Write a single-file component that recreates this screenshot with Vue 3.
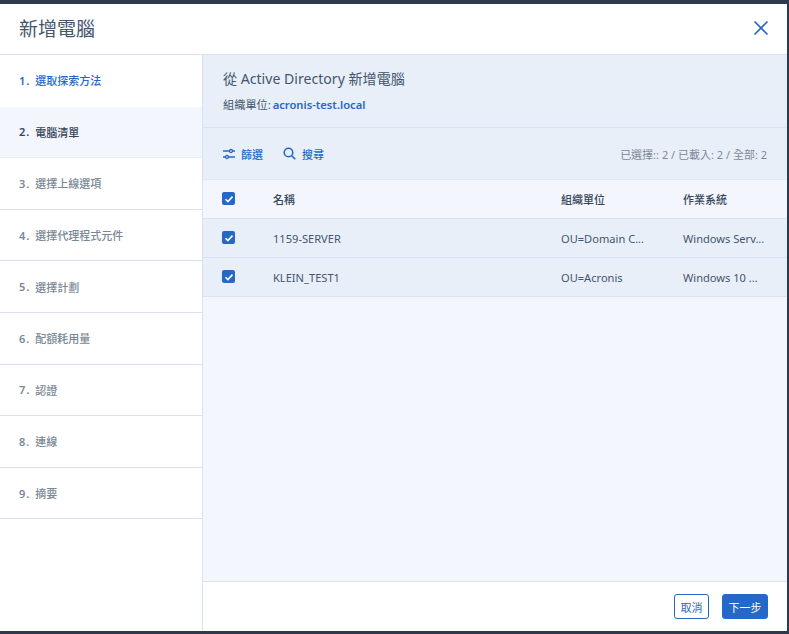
<template>
  <div class="page">
    <div class="dialog">
      <header class="dialog-head">
        <h1>新增電腦</h1>
        <button class="close" aria-label="關閉">
          <svg width="16" height="16" viewBox="0 0 16 16">
            <path d="M1.5 1.5l13 13M14.5 1.5l-13 13" fill="none" stroke="#2668c5" stroke-width="1.7" />
          </svg>
        </button>
      </header>

      <div class="dialog-body">
        <nav class="steps">
          <div
            v-for="(step, i) in steps"
            :key="step"
            class="step"
            :class="{ done: i === 0, current: i === 1 }"
          >
            <span class="num">{{ i + 1 }}.</span>{{ step }}
          </div>
        </nav>

        <main class="content">
          <section class="intro">
            <h2>從 Active Directory 新增電腦</h2>
            <p>組織單位: <a>acronis-test.local</a></p>
          </section>

          <section class="toolbar">
            <button class="tool">
              <svg width="12" height="12" viewBox="0 0 12 12" fill="none" stroke="#2668c5" stroke-width="1.3">
                <path d="M0 3h6.5M9.5 3H12M0 9h2.500M5.500 9H12" />
                <circle cx="8" cy="3" r="1.500" />
                <circle cx="4" cy="9" r="1.500" />
              </svg>
              篩選
            </button>
            <button class="tool">
              <svg width="13" height="13" viewBox="0 0 13 13" fill="none" stroke="#2668c5" stroke-width="1.600">
                <circle cx="5.500" cy="5.500" r="4.300" />
                <path d="M8.700 8.700L12.300 12.300" />
              </svg>
              搜尋
            </button>
            <span class="counts">已選擇:: 2 / 已載入: 2 / 全部: 2</span>
          </section>

          <div class="row head">
            <span class="check"><svg width="12" height="12" viewBox="0 0 12 12"><path d="M2.500 6.200l2.400 2.400 4.600-5" fill="none" stroke="#fff" stroke-width="1.600" /></svg></span>
            <span class="name">名稱</span>
            <span class="ou">組織單位</span>
            <span class="os">作業系統</span>
          </div>
          <div v-for="pc in computers" :key="pc.name" class="row">
            <span class="check"><svg width="12" height="12" viewBox="0 0 12 12"><path d="M2.500 6.200l2.400 2.400 4.600-5" fill="none" stroke="#fff" stroke-width="1.600" /></svg></span>
            <span class="name">{{ pc.name }}</span>
            <span class="ou">{{ pc.ou }}</span>
            <span class="os">{{ pc.os }}</span>
          </div>

          <div class="spacer"></div>

          <footer class="actions">
            <button class="btn ghost">取消</button>
            <button class="btn primary">下一步</button>
          </footer>
        </main>
      </div>
    </div>
  </div>
</template>

<script setup>
const steps = [
  '選取探索方法',
  '電腦清單',
  '選擇上線選項',
  '選擇代理程式元件',
  '選擇計劃',
  '配額耗用量',
  '認證',
  '連線',
  '摘要'
]

const computers = [
  { name: '1159-SERVER', ou: 'OU=Domain C...', os: 'Windows Serv...' },
  { name: 'KLEIN_TEST1', ou: 'OU=Acronis', os: 'Windows 10 ...' }
]
</script>

<style>
html, body {
  margin: 0;
  background: #2d3a4e;
}
</style>

<style scoped>
.page {
  width: 789px;
  height: 634px;
  padding: 4px 2px 3px 0;
  box-sizing: border-box;
  background: #2d3a4e;
  font-family: "Noto Sans", "Noto Sans CJK TC", sans-serif;
  color: #44566c;
}

.dialog {
  height: 100%;
  display: flex;
  flex-direction: column;
  background: #fff;
}

.dialog-head {
  height: 51px;
  flex: none;
  box-sizing: border-box;
  display: flex;
  align-items: center;
  justify-content: space-between;
  padding: 0 18px 2px 19px;
  border-bottom: 1px solid #d7e3f3;
}

.dialog-head h1 {
  margin: 0;
  font-size: 19px;
  font-weight: 400;
}

.close {
  display: flex;
  padding: 0;
  border: 0;
  background: none;
}

.dialog-body {
  flex: 1;
  display: flex;
  min-height: 0;
}

.steps {
  width: 203px;
  flex: none;
  box-sizing: border-box;
  border-right: 1px solid #d7e3f3;
}

.step {
  height: 51.600px;
  box-sizing: border-box;
  display: flex;
  align-items: center;
  padding-left: 19px;
  font-size: 11px;
  font-weight: 500;
  color: #7a8794;
  border-bottom: 1px solid #d7e3f3;
}

.num {
  margin-right: 5px;
  letter-spacing: 1px;
  font-weight: 600;
}

.step.done {
  color: #2668c5;
  border-bottom-color: transparent;
}

.step.current {
  color: #36465a;
  background: #f3f6fc;
  border-bottom-color: #e6edf8;
}

.content {
  flex: 1;
  min-width: 0;
  display: flex;
  flex-direction: column;
  background: #f3f6fc;
}

.intro {
  height: 73px;
  flex: none;
  box-sizing: border-box;
  padding: 12px 20px 0;
  background: #e8eff9;
  border-bottom: 1px solid #d7e3f3;
}

.intro h2 {
  margin: 0;
  font-size: 14.100px;
  line-height: 24px;
  font-weight: 400;
}

.intro p {
  margin: 5px 0 0;
  font-size: 11.200px;
  line-height: 18px;
}

.intro a {
  margin-left: -1px;
  color: #2668c5;
  font-weight: 600;
}

.toolbar {
  height: 52px;
  flex: none;
  box-sizing: border-box;
  display: flex;
  align-items: center;
  gap: 20px;
  padding: 0 20px;
  background: #e8eff9;
  border-bottom: 1px solid #e1e9f6;
}

.tool {
  display: flex;
  align-items: center;
  gap: 6px;
  padding: 0;
  border: 0;
  background: none;
  color: #2668c5;
  font: 500 11px "Noto Sans", "Noto Sans CJK TC", sans-serif;
}

.counts {
  margin-left: auto;
  font-size: 11px;
  color: #7d8996;
}

.row {
  height: 39px;
  flex: none;
  box-sizing: border-box;
  display: flex;
  align-items: center;
  font-size: 11.100px;
  background: #e8eff9;
  border-bottom: 1px solid #d7e3f3;
}

.row.head {
  height: 38.500px;
  background: #f3f6fc;
  font-size: 11px;
  font-weight: 500;
  color: #36465a;
}

.row span:not(.check) {
  padding-top: 1px;
}

.check {
  width: 13px;
  height: 13px;
  margin-left: 19px;
  flex: none;
  display: flex;
  align-items: center;
  justify-content: center;
  border-radius: 2px;
  background: #2668c5;
}

.name {
  width: 288px;
  margin-left: 38px;
  flex: none;
}

.ou {
  width: 122px;
  flex: none;
}

.spacer {
  flex: 1;
}

.actions {
  height: 50px;
  flex: none;
  box-sizing: border-box;
  display: flex;
  align-items: center;
  justify-content: flex-end;
  gap: 13px;
  padding: 0 19px 0 0;
  background: #fff;
  border-top: 1px solid #d7e3f3;
}

.btn {
  height: 25px;
  padding: 0;
  box-sizing: border-box;
  border-radius: 3px;
  font: 400 11px "Noto Sans", "Noto Sans CJK TC", sans-serif;
}

.ghost {
  width: 35px;
  background: #fff;
  border: 1px solid #2668c5;
  color: #2668c5;
}

.primary {
  width: 46px;
  background: #2668c5;
  border: 1px solid #2668c5;
  color: #fff;
}
</style>
